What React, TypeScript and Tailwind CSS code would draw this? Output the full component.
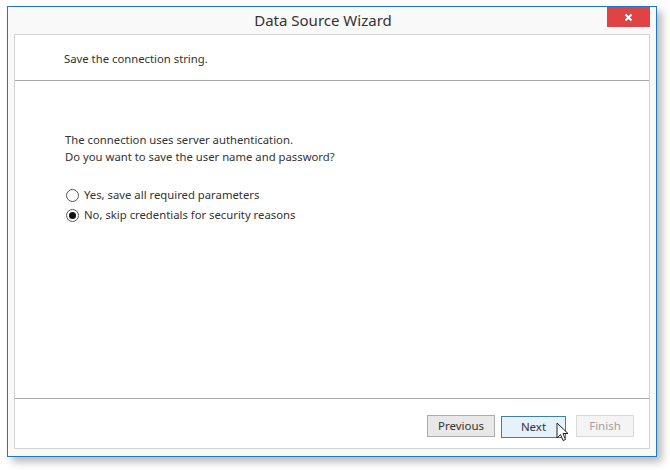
import React from "react";

const font = { fontFamily: '"Segoe UI", "Noto Sans", "Open Sans", sans-serif' };

function Radio({ checked, label }: { checked?: boolean; label: string }) {
  return (
    <div className="flex items-center h-[20px]">
      <span className="w-[13px] h-[13px] rounded-full border border-[#555] bg-white flex items-center justify-center ml-[1px]">
        {checked && <span className="w-[7px] h-[7px] rounded-full bg-[#111]" />}
      </span>
      <span className="ml-[5px] text-[11.3px] text-[#333]">{label}</span>
    </div>
  );
}

export default function App() {
  return (
    <div className="w-[670px] h-[470px] bg-white pl-[7px] pt-[6px]" style={font}>
      <div className="w-[650px] h-[451px] border border-[#1c78c9] bg-[#f9f9f9] flex flex-col shadow-[5px_5px_8px_rgba(0,0,0,0.28)]">
        <div className="relative h-[27px] flex items-center justify-center pr-[18px]">
          <span className="text-[15px] text-[#333] leading-none -mt-[1px]">Data Source Wizard</span>
          <div className="absolute right-[6px] top-0 w-[43px] h-[20px] bg-[#e04343] flex items-center justify-center">
            <svg width="9" height="9" viewBox="0 0 9 9">
              <path d="M1.5 1.5 L7.5 7.5 M7.5 1.5 L1.5 7.5" stroke="white" strokeWidth="2" />
            </svg>
          </div>
        </div>
        <div className="mx-[6px] mb-[7px] flex-1 border border-[#d4d4d4] bg-white flex flex-col">
          <div className="h-[46px] border-b border-[#a8a8a8] flex items-center pl-[49px] pt-[3px]">
            <span className="text-[11.3px] text-[#333]">Save the connection string.</span>
          </div>
          <div className="flex-1 pl-[50px] pt-[50px]">
            <div className="text-[11.3px] text-[#333] leading-[17px]">
              <div>The connection uses server authentication.</div>
              <div>Do you want to save the user name and password?</div>
            </div>
            <div className="mt-[20px] flex flex-col">
              <Radio label="Yes, save all required parameters" />
              <Radio checked label="No, skip credentials for security reasons" />
            </div>
          </div>
          <div className="h-[50px] border-t border-[#a8a8a8] flex items-center justify-end pr-[15px] pt-[4px]">
            <button className="w-[68px] h-[22px] border border-[#acacac] bg-[#e8e8e8] text-[11.5px] text-[#333]">Previous</button>
            <div className="relative ml-[6px]">
              <button className="w-[65px] h-[22px] border border-[#3c7fb1] bg-[#e5f1fb] text-[11.5px] text-[#333]">Next</button>
              <svg className="absolute left-[55px] top-[9px]" width="14" height="21" viewBox="0 0 14 21">
                <path d="M1 1 L1 16 L4.5 12.5 L7 18.5 L9.5 17.5 L7 11.5 L12 11.5 Z" fill="white" stroke="#222" strokeWidth="1" strokeLinejoin="round" />
              </svg>
            </div>
            <button className="ml-[10px] w-[58px] h-[22px] border border-[#d9d9d9] bg-[#f4f4f4] text-[11.5px] text-[#a0a0a0]">Finish</button>
          </div>
        </div>
      </div>
    </div>
  );
}
